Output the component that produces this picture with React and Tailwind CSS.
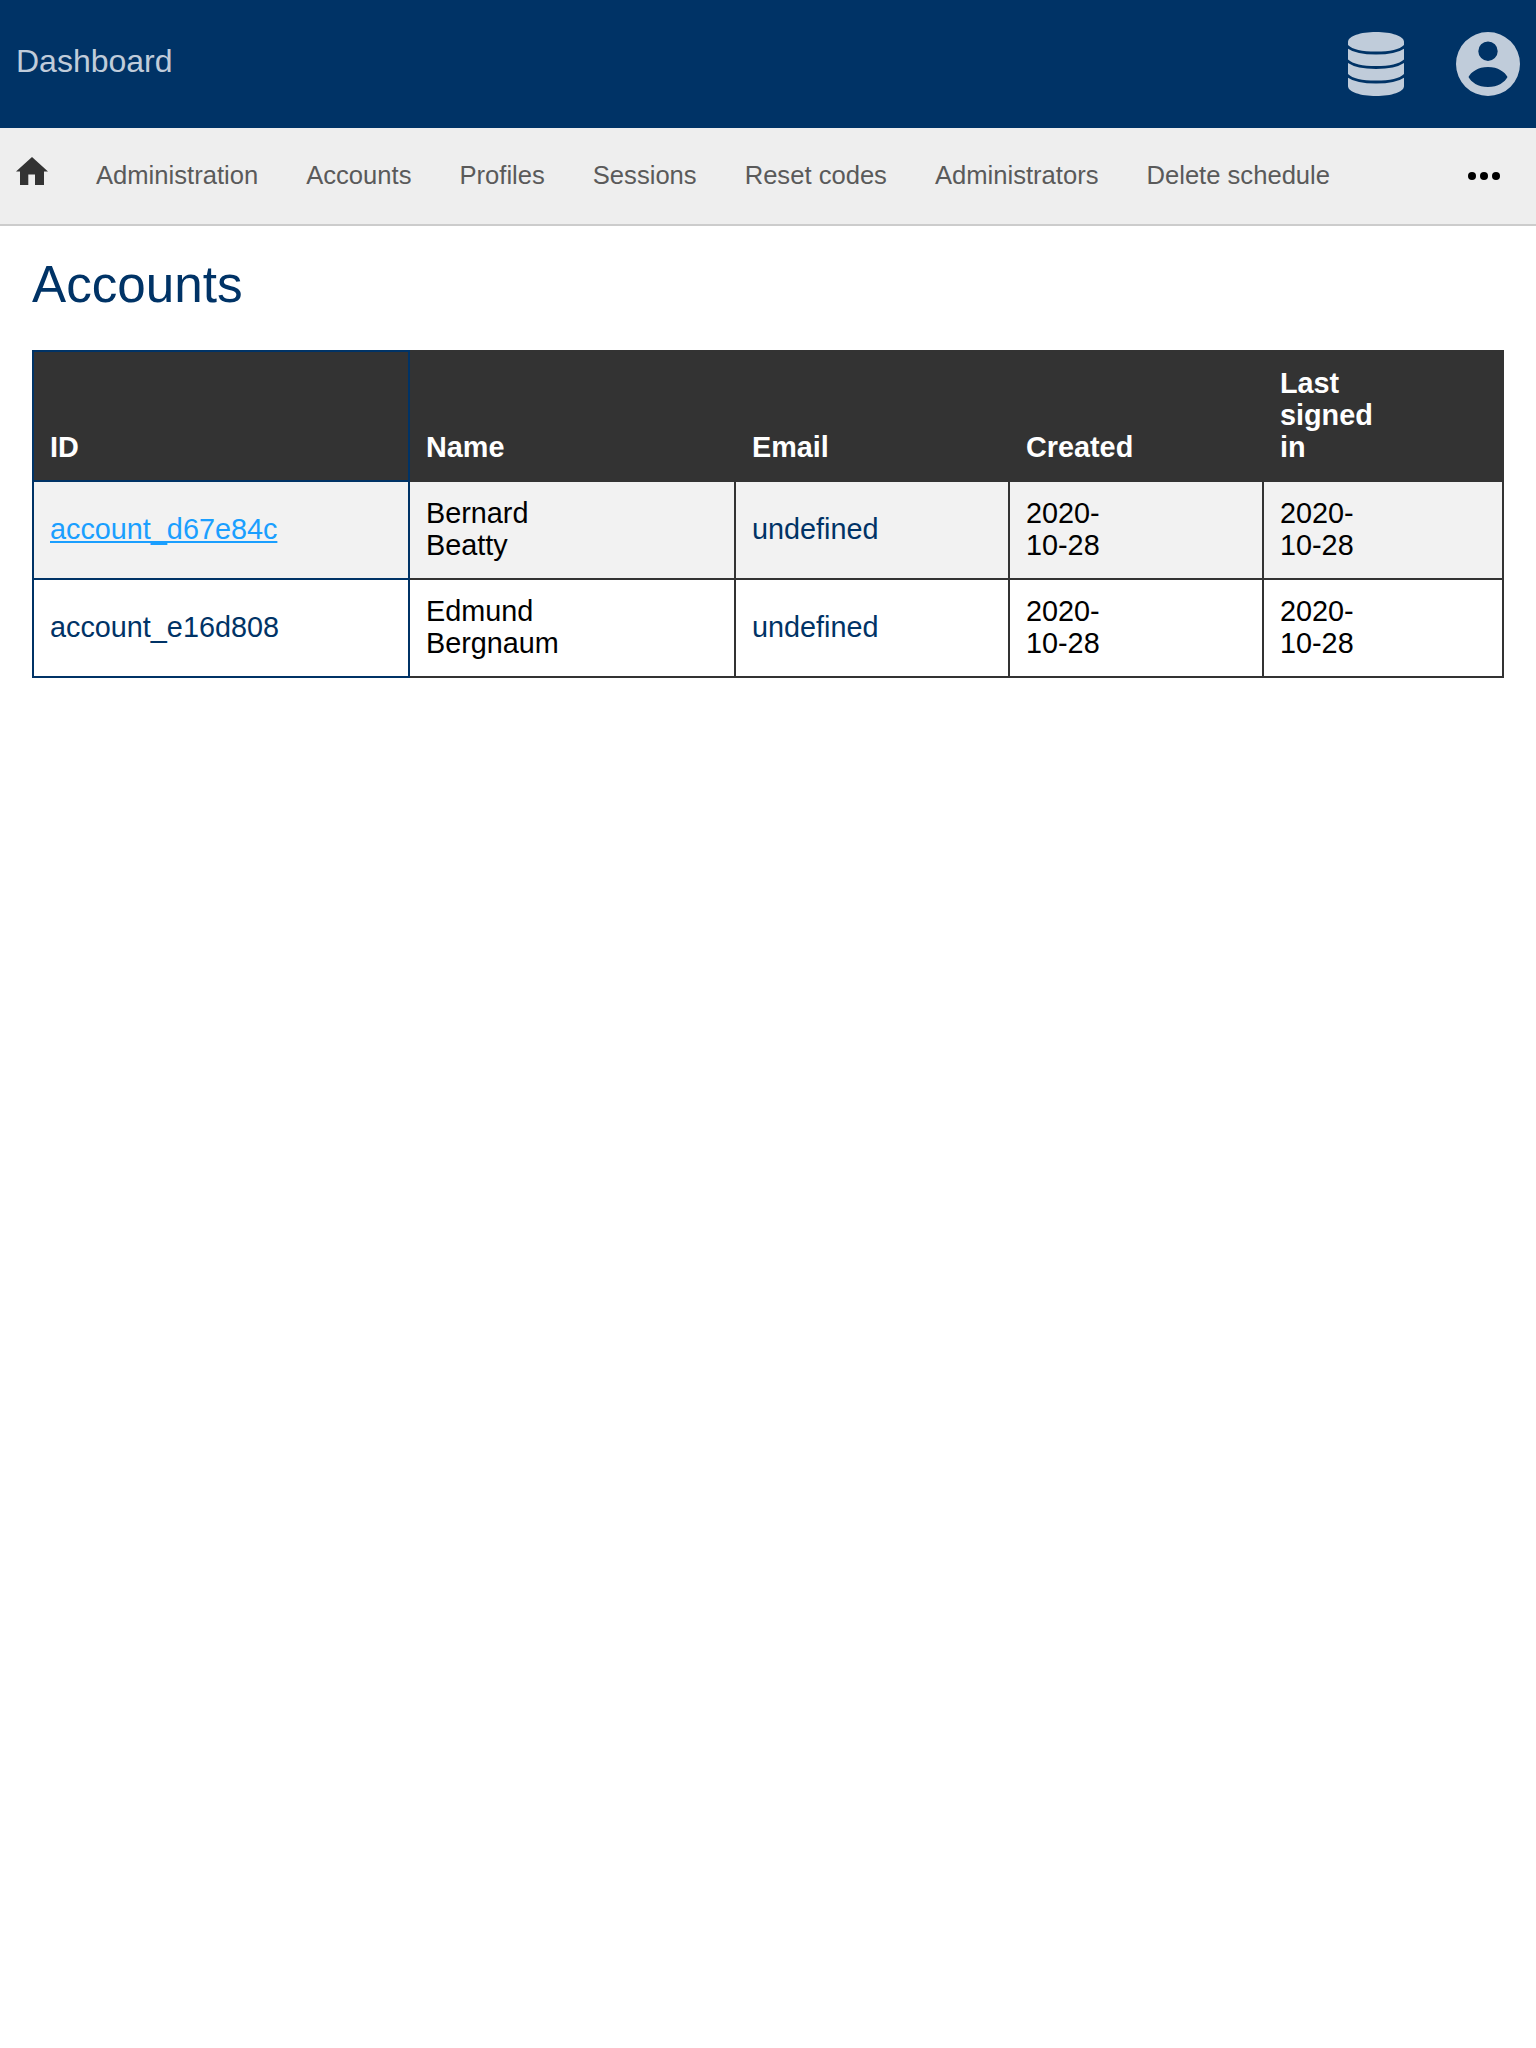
import React from "react";

const nav = ["Administration", "Accounts", "Profiles", "Sessions", "Reset codes", "Administrators", "Delete schedule"];
const rows = [
  { id: "account_d67e84c", link: true, first: "Bernard", last: "Beatty" },
  { id: "account_e16d808", link: false, first: "Edmund", last: "Bergnaum" },
];

const dark = "border-2 border-[#333333] px-4 pt-[14.5px] pb-[17.5px]";
const navy = "border-2 border-[#003366] px-4 pt-[14.5px] pb-[17.5px]";

export default function App() {
  return (
    <div className="min-h-[2048px] bg-white font-['Liberation_Sans',Arial,sans-serif]">
      <header className="flex h-[128px] items-center bg-[#003366] pl-4 pr-4 text-[#c0ccda]">
        <span className="mb-[6px] text-[32px] leading-none">Dashboard</span>
        <svg viewBox="0 0 56 64" className="ml-auto h-16 w-[56px]" fill="currentColor">
          <path d="M0 10C0 4 12.500 0 28 0S56 4 56 10V54C56 60 43.500 64 28 64S0 60 0 54Z" />
          <g fill="none" stroke="#003366" strokeWidth="2.800">
            <path d="M-1 14C4 19 16 21 28 21S52 19 57 14" />
            <path d="M-1 28.500C4 33 16 35.500 28 35.500S52 33 57 28.500" />
            <path d="M-1 43C4 48 16 50 28 50S52 48 57 43" />
          </g>
        </svg>
        <svg viewBox="0 0 64 64" className="ml-[52px] h-16 w-16" fill="currentColor" fillRule="evenodd">
          <path d="M32 0a32 32 0 1 1 0 64a32 32 0 1 1 0-64ZM32 9.500a9.700 9.700 0 1 0 0 19.400a9.700 9.700 0 1 0 0-19.400ZM32 35c-10 0-17 5-19.500 10c2.500 5 9.500 10 19.500 10s17-5 19.500-10C49 40 42 35 32 35Z" />
        </svg>
      </header>
      <nav className="flex h-[98px] items-center border-b-2 border-[#cccccc] bg-[#eeeeee] pl-4 pr-[36px] text-[25.6px] leading-8 text-[#5a5a5a]">
        <svg viewBox="0 0 32 28" className="mb-[10px] h-[28px] w-[32px] text-[#333333]" fill="currentColor">
          <path d="M16 0L32 14.500H28V28H19V17.500H12.300V28H4V14.500H0Z" />
        </svg>
        <div className="mb-[2px] ml-[48px] flex gap-[48px]">
          {nav.map((n) => (
            <span key={n}>{n}</span>
          ))}
        </div>
        <div className="ml-auto flex gap-[4px]">
          <i className="block h-2 w-2 rounded-full bg-black" />
          <i className="block h-2 w-2 rounded-full bg-black" />
          <i className="block h-2 w-2 rounded-full bg-black" />
        </div>
      </nav>
      <main className="px-8">
        <h1 className="pt-[29px] pb-[35px] text-[51.2px] leading-[60px] text-[#003366]">Accounts</h1>
        <table className="w-[1470px] table-fixed border-collapse text-[28.8px] leading-8 text-black">
          <colgroup>
            <col className="w-[376px]" />
            <col className="w-[326px]" />
            <col className="w-[274px]" />
            <col className="w-[254px]" />
            <col className="w-[240px]" />
          </colgroup>
          <thead>
            <tr className="bg-[#333333] text-left align-bottom font-bold text-white">
              <th className={navy}>ID</th>
              <th className={dark}>Name</th>
              <th className={dark}>Email</th>
              <th className={dark}>Created</th>
              <th className={dark}>Last<br />signed<br />in</th>
            </tr>
          </thead>
          <tbody>
            {rows.map((r, i) => (
              <tr key={r.id} className={i === 0 ? "bg-[#f2f2f2]" : "bg-white"}>
                <td className={navy + " text-[#003366]"}>
                  {r.link ? <a href="#" className="text-[#1a9fff] underline">{r.id}</a> : r.id}
                </td>
                <td className={dark}>{r.first}<br />{r.last}</td>
                <td className={dark + " text-[#003366]"}>undefined</td>
                <td className={dark}>2020-<br />10-28</td>
                <td className={dark}>2020-<br />10-28</td>
              </tr>
            ))}
          </tbody>
        </table>
      </main>
    </div>
  );
}
